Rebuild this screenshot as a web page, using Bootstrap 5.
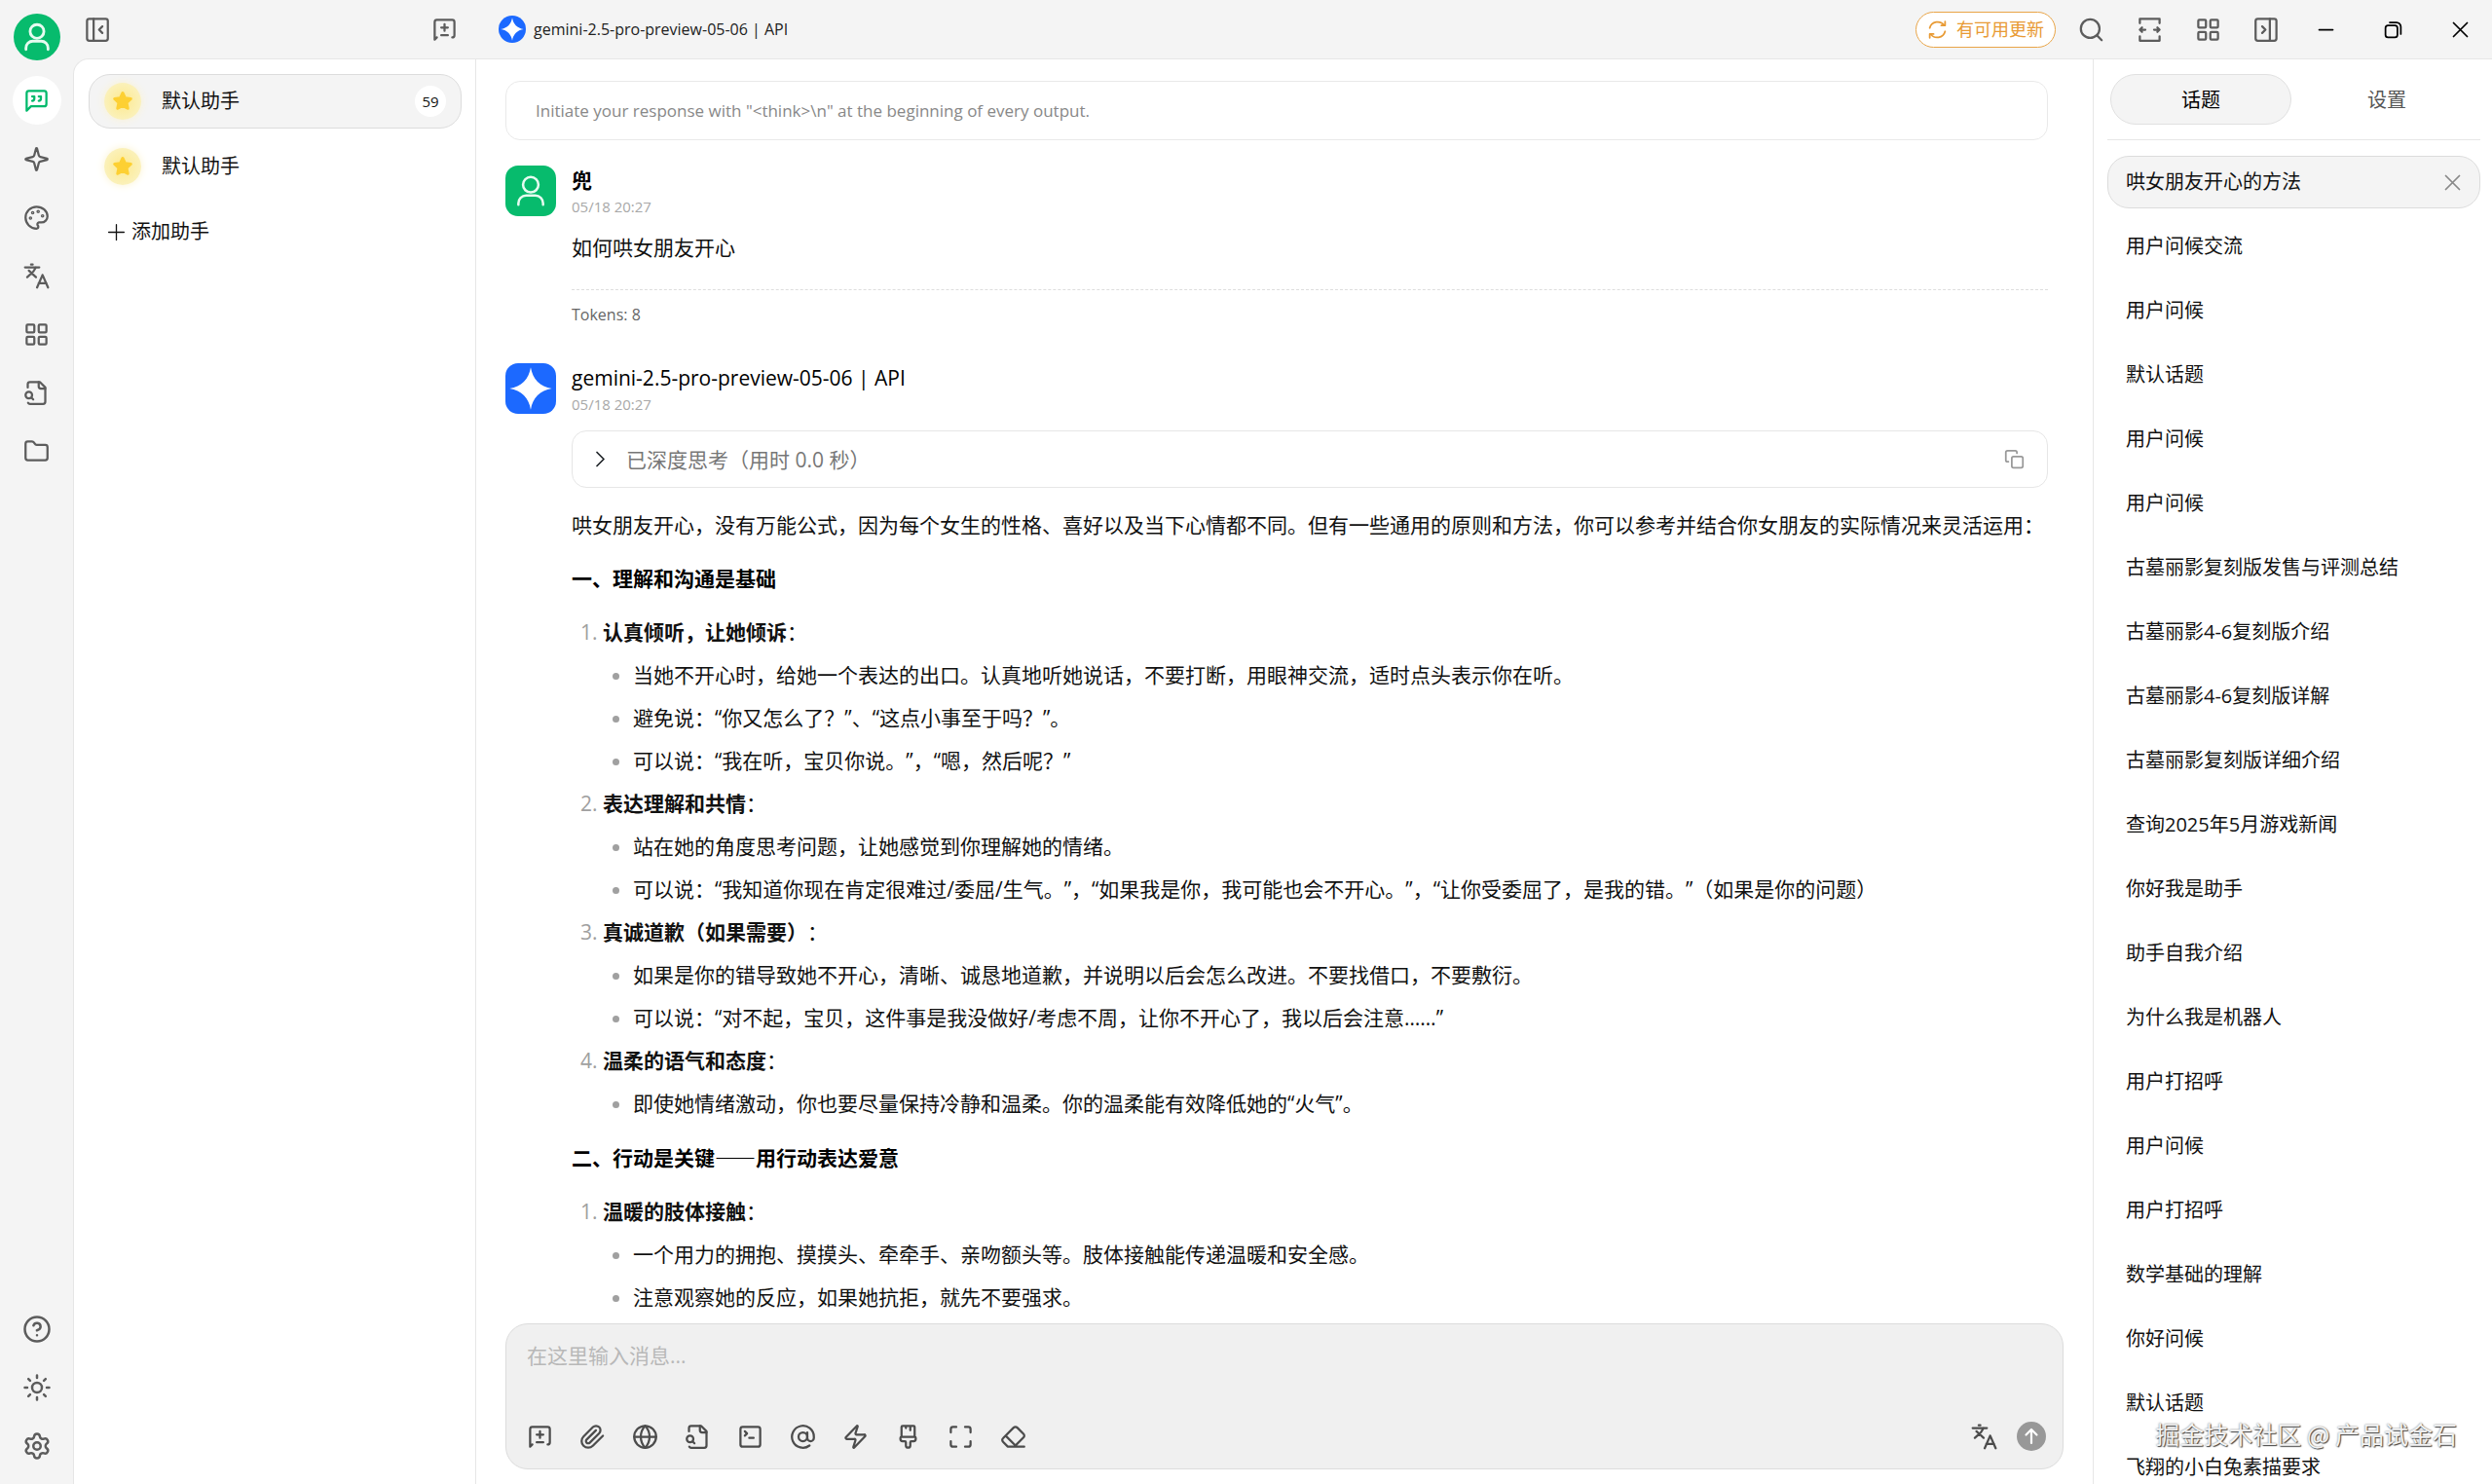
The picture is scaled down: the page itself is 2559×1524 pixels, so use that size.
<!DOCTYPE html>
<html lang="zh-CN">
<head>
<meta charset="utf-8">
<meta name="viewport" content="width=device-width, initial-scale=1">
<title>gemini-2.5-pro-preview-05-06 | API</title>
<link href="https://cdn.jsdelivr.net/npm/bootstrap@5.3.0/dist/css/bootstrap.min.css" rel="stylesheet">
<style>
  :root { --line: #e6e6e6; --soft: #f4f4f4; --ink: #111; --icon: #5c5c5c; }
  body { font-family: "Open Sans", "Noto Sans CJK SC", sans-serif; font-size: 20px; line-height: 30px; color: var(--ink); background: var(--soft); text-spacing-trim: space-all; }
  svg.ico { width: 27px; height: 27px; fill: none; stroke: currentColor; stroke-width: 2; stroke-linecap: round; stroke-linejoin: round; display: block; flex: none; }
  svg.ico-lg { width: 30px; height: 30px; }
  svg.ico-sm { width: 21px; height: 21px; }
  .plain { background: none; border: 0; padding: 0; color: var(--icon); display: flex; align-items: center; justify-content: center; text-decoration: none; }

  .rail { width: 75px; padding: 14px 0; }
  .rail .plain { width: 50px; height: 50px; border-radius: 50%; }
  .rail .plain.current { background: #fff; color: #00b96b; }
  .rail .plain.me { width: 48px; height: 48px; background: #07bb6d; color: #e6fbf0; }
  .face.me { background: #07bb6d; color: #e6fbf0; }
  .me svg.ico { width: 34px; height: 34px; stroke-width: 2; }
  .rail-group { gap: 10px; }

  .topbar { height: 60px; }
  .topbar-left { width: 413px; padding: 0 18px 0 11px; }
  .model-name { font-size: 16px; color: #222; }
  .gem { border-radius: 50%; background: #1c69ff; width: 28px; height: 28px; }
  .update { height: 37px; border: 1px solid #e9a548; border-radius: 20px; background: #fff; color: #e89a34; font-size: 18px; line-height: 24px; padding: 0 11px; gap: 9px; margin-right: -10px; }
  .tools { gap: 33px; padding-right: 22px; }
  .win { gap: 44px; color: #000; padding-left: 4px; }
  .win .plain { color: #000; }

  .stage { background: #fff; border-top: 1px solid var(--line); border-left: 1px solid var(--line); border-top-left-radius: 16px; overflow: hidden; }
  .assistants { width: 413px; padding: 15px 14px 15px 15px; border-right: 1px solid var(--line); }
  .assistants .pick { height: 56px; border: 1px solid transparent; border-radius: 22px; padding: 0 15px; gap: 21px; color: var(--ink); text-decoration: none; background: none; margin-bottom: 11px; }
  .assistants .pick.current { background: var(--soft); border-color: #dcdcdc; }
  .halo { width: 38px; height: 38px; border-radius: 50%; background: radial-gradient(circle, #fde98f 0, #fbf0b4 60%, #faf3cd 100%); box-shadow: 0 0 8px #fbf3d0; }
  .halo svg { width: 24px; height: 24px; }
  .count { width: 32px; height: 32px; border-radius: 50%; background: #fff; font-size: 15px; }
  .assistants .add { gap: 5px; padding: 0 17px; }
  .add svg.ico { stroke-width: 1.5; }

  .feed { padding: 22px 46px 0 30px; overflow: hidden; }
  .prompt-box { border: 1px solid #e9e9e9; border-radius: 15px; height: 61px; padding: 0 30px; font-size: 17px; color: #888; margin-bottom: 26px; }
  .msg { gap: 16px; }
  .face { width: 52px; height: 52px; border-radius: 13px; flex: none; }
  .face.me svg.ico { width: 38px; height: 38px; stroke-width: 1.6; }
  .face.bot { background: #1c69ff; }
  .who { font-size: 21px; line-height: 30px; color: #000; }
  .when { font-size: 15px; line-height: 24px; color: #a8a8a8; }
  .said { font-size: 21px; line-height: 34px; }
  .msg .said { margin-top: 13px; }
  .foot { border-top: 1px dashed #dedede; margin-top: 26px; padding-top: 10px; font-size: 16px; color: #666; margin-bottom: 35px; }
  .thought { height: 59px; border: 1px solid #e6e6e6; border-radius: 15px; padding: 0 23px 0 18px; margin-top: 15px; font-size: 21px; color: #777; gap: 16px; }
  .thought .plain { color: #999; }
  .msg .answer { margin-top: 21px; }
  .answer p, .answer h2 { font-size: 21px; line-height: 34px; margin: 0 0 21px; }
  .answer h2 { font-weight: 700; color: #000; }
  .answer h2 span { font-family: "Noto Sans CJK SC", sans-serif; }
  .answer ol { padding-left: 32px; margin: 0 0 21px; }
  .answer ul { padding-left: 31px; margin: 10px 0 0; list-style: disc; }
  .answer li + li { margin-top: 10px; }
  .answer li::marker { color: #a0a0a0; }

  .composer { margin: 0 30px 15px; border: 1px solid #dcdcdc; border-radius: 23px; background: #f0f0f0; height: 150px; padding: 15px 17px 18px 21px; }
  .composer textarea { border: 0; background: none; resize: none; outline: 0; font-size: 21px; line-height: 34px; padding: 0; color: var(--ink); }
  .composer textarea::placeholder { color: #b8b8b8; opacity: 1; }
  .composer .plain { color: #4c4c4c; }
  .kit { gap: 27px; }
  .send svg { width: 30px; height: 30px; }

  .topics { width: 410px; border-left: 1px solid var(--line); padding: 15px 12px 0 14px; overflow: hidden; }
  .tabs { padding: 0 3px 15px 3px; border-bottom: 1px solid var(--line); gap: 5px; margin-bottom: 16px; }
  .tabs button { height: 52px; border: 1px solid transparent; border-radius: 26px; background: none; color: #555; flex: 1 1 0; padding-top: 3px; }
  .tabs button.current { background: var(--soft); border-color: #e0e0e0; color: #000; }
  .topics li { height: 54px; margin-bottom: 12px; padding: 0 17px 0 18px; border: 1px solid transparent; border-radius: 22px; }
  .topics li.current { background: var(--soft); border-color: #dcdcdc; }
  .topics li a { color: var(--ink); text-decoration: none; white-space: nowrap; }
  .topics .plain { color: #888; }
  .stamp { position: absolute; right: 36px; bottom: 32px; font-size: 25px; line-height: 40px; color: #f2f2f2; text-shadow: 1px 1px 1px #444, 0 0 2px #777; pointer-events: none; font-family: "Noto Sans CJK SC", sans-serif; }
</style>
</head>
<body>
<svg class="d-none" xmlns="http://www.w3.org/2000/svg">
  <symbol id="user" viewBox="0 0 24 24"><circle cx="12" cy="8" r="5"/><path d="M20 21v-1a5 5 0 0 0-5-5H9a5 5 0 0 0-5 5v1"/></symbol>
  <symbol id="quote" viewBox="0 0 24 24"><path d="M21 15a2 2 0 0 1-2 2H7l-4 4V5a2 2 0 0 1 2-2h14a2 2 0 0 1 2 2z"/><path d="M8 12a2 2 0 0 0 2-2V8H8M14 12a2 2 0 0 0 2-2V8h-2"/></symbol>
  <symbol id="sparkle" viewBox="0 0 24 24"><path d="M9.937 15.5A2 2 0 0 0 8.5 14.063l-6.135-1.582a.5.5 0 0 1 0-.962L8.5 9.936A2 2 0 0 0 9.937 8.5l1.582-6.135a.5.5 0 0 1 .963 0L14.063 8.5A2 2 0 0 0 15.5 9.937l6.135 1.581a.5.5 0 0 1 0 .964L15.5 14.063a2 2 0 0 0-1.437 1.437l-1.582 6.135a.5.5 0 0 1-.963 0z"/></symbol>
  <symbol id="palette" viewBox="0 0 24 24"><circle cx="13.5" cy="6.5" r=".6"/><circle cx="17.5" cy="10.5" r=".6"/><circle cx="8.5" cy="7.5" r=".6"/><circle cx="6.5" cy="12.5" r=".6"/><path d="M12 2C6.5 2 2 6.5 2 12s4.5 10 10 10c.926 0 1.648-.746 1.648-1.688 0-.437-.18-.835-.437-1.125-.29-.289-.438-.652-.438-1.125a1.64 1.64 0 0 1 1.668-1.668h1.996c3.051 0 5.555-2.503 5.555-5.554C21.965 6.012 17.461 2 12 2z"/></symbol>
  <symbol id="lang" viewBox="0 0 24 24"><path d="m5 7 6.500 6M3.500 13l5.500-5 2.500-4M1.500 4h13M7 1.500h1.500M22.500 22.500l-5-11.500-5 11.500M14 18.500h7"/></symbol>
  <symbol id="grid" viewBox="0 0 24 24"><rect x="3" y="3" width="7" height="7" rx="1"/><rect x="14" y="3" width="7" height="7" rx="1"/><rect x="14" y="14" width="7" height="7" rx="1"/><rect x="3" y="14" width="7" height="7" rx="1"/></symbol>
  <symbol id="filesearch" viewBox="0 0 24 24"><path d="M14 2v4a2 2 0 0 0 2 2h4"/><path d="M4.268 21a2 2 0 0 0 1.727 1H18a2 2 0 0 0 2-2V7l-5-5H6a2 2 0 0 0-2 2v3"/><path d="m9 18-1.500-1.500"/><circle cx="5" cy="14" r="3"/></symbol>
  <symbol id="folder" viewBox="0 0 24 24"><path d="M20 20a2 2 0 0 0 2-2V8a2 2 0 0 0-2-2h-7.900a2 2 0 0 1-1.690-.9L9.600 3.900A2 2 0 0 0 7.930 3H4a2 2 0 0 0-2 2v13a2 2 0 0 0 2 2Z"/></symbol>
  <symbol id="help" viewBox="0 0 24 24"><circle cx="12" cy="12" r="10"/><path d="M9.090 9a3 3 0 0 1 5.830 1c0 2-3 3-3 3M12 17h.01"/></symbol>
  <symbol id="sun" viewBox="0 0 24 24"><circle cx="12" cy="12" r="4"/><path d="M12 2v2M12 20v2M4.930 4.930l1.410 1.410M17.660 17.660l1.410 1.410M2 12h2M20 12h2M6.340 17.660l-1.410 1.410M19.070 4.930l-1.410 1.410"/></symbol>
  <symbol id="gear" viewBox="0 0 24 24"><path d="M9.670 4.140a2.340 2.340 0 0 1 4.660 0 2.340 2.340 0 0 0 3.320 1.910 2.340 2.340 0 0 1 2.330 4.030 2.340 2.340 0 0 0 0 3.840 2.340 2.340 0 0 1-2.330 4.030 2.340 2.340 0 0 0-3.320 1.910 2.340 2.340 0 0 1-4.660 0 2.340 2.340 0 0 0-3.320-1.910 2.340 2.340 0 0 1-2.330-4.030 2.340 2.340 0 0 0 0-3.840 2.340 2.340 0 0 1 2.330-4.030 2.340 2.340 0 0 0 3.320-1.910"/><circle cx="12" cy="12" r="3"/></symbol>
  <symbol id="panelleft" viewBox="0 0 24 24"><rect x="3" y="2" width="19" height="20" rx="2"/><path d="M9 2v20M17 15l-3-3 3-3"/></symbol>
  <symbol id="panelright" viewBox="0 0 24 24"><rect x="2" y="2" width="19" height="20" rx="2"/><path d="M15 2v20M8 9l3 3-3 3"/></symbol>
  <symbol id="newtopic" viewBox="0 0 24 24"><path d="m5 19-2 2V5a2 2 0 0 1 2-2h14a2 2 0 0 1 2 2v12a2 2 0 0 1-2 2M9 10h6M12 7v6M9 17h6"/></symbol>
  <symbol id="search" viewBox="0 0 24 24"><circle cx="11" cy="11" r="8.500"/><path d="m21.500 21.500-4.300-4.300"/></symbol>
  <symbol id="widen" viewBox="0 0 24 24"><path d="M3 6V2h18v4M3 18v4h18v-4M3 12h5M16 12h5M5 10l-2 2 2 2M19 10l2 2-2 2"/></symbol>
  <symbol id="refresh" viewBox="0 0 24 24"><path d="M3 10a9.500 9.500 0 0 1 17-3M21 2.500V7h-4.500M21 14a9.500 9.500 0 0 1-17 3M3 21.500V17h4.500"/></symbol>
  <symbol id="clip" viewBox="0 0 24 24"><path d="m21.440 11.050-9.190 9.190a6 6 0 0 1-8.490-8.490l8.570-8.570A4 4 0 1 1 18 8.840l-8.590 8.570a2 2 0 0 1-2.830-2.830l8.490-8.480"/></symbol>
  <symbol id="globe" viewBox="0 0 24 24"><circle cx="12" cy="12" r="10"/><path d="M12 2a14.500 14.500 0 0 0 0 20 14.500 14.500 0 0 0 0-20M2 12h20"/></symbol>
  <symbol id="term" viewBox="0 0 24 24"><rect x="3" y="3" width="18" height="18" rx="2"/><path d="m7 11 2-2-2-2M11 13h4"/></symbol>
  <symbol id="at" viewBox="0 0 24 24"><circle cx="12" cy="12" r="4"/><path d="M16 8v5a3 3 0 0 0 6 0v-1a10 10 0 1 0-4 8"/></symbol>
  <symbol id="zap" viewBox="0 0 24 24"><path d="M4 14a1 1 0 0 1-.780-1.630l9.900-10.200a.5.5 0 0 1 .860.460l-1.920 6.020A1 1 0 0 0 13 10h7a1 1 0 0 1 .780 1.630l-9.900 10.200a.5.5 0 0 1-.860-.460l1.920-6.020A1 1 0 0 0 11 14z"/></symbol>
  <symbol id="brush" viewBox="0 0 24 24"><path d="M10 2v2M14 2v4M17 2a1 1 0 0 1 1 1v9H6V3a1 1 0 0 1 1-1zM6 12a1 1 0 0 0-1 1v1a2 2 0 0 0 2 2h2a1 1 0 0 1 1 1v2.900a2 2 0 1 0 4 0V17a1 1 0 0 1 1-1h2a2 2 0 0 0 2-2v-1a1 1 0 0 0-1-1"/></symbol>
  <symbol id="full" viewBox="0 0 24 24"><path d="M8 3H5a2 2 0 0 0-2 2v3M21 8V5a2 2 0 0 0-2-2h-3M3 16v3a2 2 0 0 0 2 2h3M16 21h3a2 2 0 0 0 2-2v-3"/></symbol>
  <symbol id="eraser" viewBox="0 0 24 24"><path d="m7 21-4.300-4.300c-1-1-1-2.500 0-3.400l9.600-9.600c1-1 2.500-1 3.400 0l5.600 5.600c1 1 1 2.500 0 3.400L13 21M22 21H7M5 11l9 9"/></symbol>
  <symbol id="copy" viewBox="0 0 24 24"><rect x="9" y="9" width="13" height="13" rx="2"/><path d="M5 15H4a2 2 0 0 1-2-2V4a2 2 0 0 1 2-2h9a2 2 0 0 1 2 2v1"/></symbol>
  <symbol id="cross" viewBox="0 0 24 24"><path d="M4 4l16 16M20 4 4 20"/></symbol>
  <symbol id="plus" viewBox="0 0 24 24"><path d="M12 3v18M3 12h18"/></symbol>
  <symbol id="chev" viewBox="0 0 24 24"><path d="m8 4 8 8-8 8"/></symbol>
  <symbol id="minus" viewBox="0 0 24 24"><path d="M4 12h16"/></symbol>
  <symbol id="restore" viewBox="0 0 24 24"><rect x="3" y="7" width="14" height="14" rx="3"/><path d="M8 3.500h8a5 5 0 0 1 5 5V17"/></symbol>
  <symbol id="gem" viewBox="0 0 24 24"><path fill="#fff" d="M12 2c.9 5.600 4.400 9.100 10 10-5.600.9-9.100 4.400-10 10-.9-5.600-4.400-9.100-10-10 5.600-.9 9.100-4.400 10-10z"/></symbol>
  <symbol id="star" viewBox="0 0 24 24"><path fill="#fdd033" stroke="#fdd033" stroke-width="3" stroke-linejoin="round" d="m12 3.500 2.500 5.300 5.800.7-4.300 4 1.200 5.800L12 16.500l-5.200 2.800L8 13.500l-4.300-4 5.800-.7z"/></symbol>
</svg>

<div class="d-flex vh-100 overflow-hidden">
  <nav class="rail d-flex flex-column align-items-center flex-shrink-0" aria-label="主导航">
    <button class="plain me flex-shrink-0" aria-label="用户"><svg class="ico"><use href="#user"/></svg></button>
    <div class="rail-group d-flex flex-column pt-3">
      <a href="#" class="plain current" aria-label="聊天"><svg class="ico"><use href="#quote"/></svg></a>
      <a href="#" class="plain" aria-label="智能体"><svg class="ico"><use href="#sparkle"/></svg></a>
      <a href="#" class="plain" aria-label="绘画"><svg class="ico"><use href="#palette"/></svg></a>
      <a href="#" class="plain" aria-label="翻译"><svg class="ico"><use href="#lang"/></svg></a>
      <a href="#" class="plain" aria-label="小程序"><svg class="ico"><use href="#grid"/></svg></a>
      <a href="#" class="plain" aria-label="知识库"><svg class="ico"><use href="#filesearch"/></svg></a>
      <a href="#" class="plain" aria-label="文件"><svg class="ico"><use href="#folder"/></svg></a>
    </div>
    <div class="rail-group d-flex flex-column mt-auto">
      <a href="#" class="plain" aria-label="帮助"><svg class="ico ico-lg"><use href="#help"/></svg></a>
      <a href="#" class="plain" aria-label="主题"><svg class="ico ico-lg"><use href="#sun"/></svg></a>
      <a href="#" class="plain" aria-label="设置"><svg class="ico ico-lg"><use href="#gear"/></svg></a>
    </div>
  </nav>

  <div class="d-flex flex-column flex-grow-1 overflow-hidden">
    <header class="topbar d-flex align-items-center flex-shrink-0">
      <div class="topbar-left d-flex justify-content-between">
        <button class="plain" aria-label="收起"><svg class="ico"><use href="#panelleft"/></svg></button>
        <button class="plain" aria-label="新建话题"><svg class="ico"><use href="#newtopic"/></svg></button>
      </div>
      <button class="plain gap-2 ms-4"><svg class="gem"><use href="#gem"/></svg><span class="model-name">gemini-2.5-pro-preview-05-06 | API</span></button>
      <div class="tools d-flex align-items-center ms-auto">
        <button class="update d-flex align-items-center"><svg class="ico ico-sm"><use href="#refresh"/></svg>有可用更新</button>
        <button class="plain" aria-label="搜索"><svg class="ico"><use href="#search"/></svg></button>
        <button class="plain" aria-label="宽度"><svg class="ico"><use href="#widen"/></svg></button>
        <button class="plain" aria-label="小程序"><svg class="ico"><use href="#grid"/></svg></button>
        <button class="plain" aria-label="侧栏"><svg class="ico"><use href="#panelright"/></svg></button>
        <div class="win d-flex">
          <button class="plain" aria-label="最小化"><svg class="ico ico-sm"><use href="#minus"/></svg></button>
          <button class="plain px-1" aria-label="还原"><svg class="ico ico-sm"><use href="#restore"/></svg></button>
          <button class="plain" aria-label="关闭"><svg class="ico ico-sm"><use href="#cross"/></svg></button>
        </div>
      </div>
    </header>

    <div class="stage d-flex flex-grow-1">
      <aside class="assistants flex-shrink-0 d-flex flex-column">
        <a href="#" class="pick current d-flex align-items-center"><span class="halo d-flex align-items-center justify-content-center"><svg><use href="#star"/></svg></span><span>默认助手</span><span class="count d-flex align-items-center justify-content-center ms-auto">59</span></a>
        <a href="#" class="pick d-flex align-items-center"><span class="halo d-flex align-items-center justify-content-center"><svg><use href="#star"/></svg></span><span>默认助手</span></a>
        <button class="pick add d-flex align-items-center"><svg class="ico ico-sm"><use href="#plus"/></svg>添加助手</button>
      </aside>

      <main class="d-flex flex-column flex-grow-1 overflow-hidden">
        <div class="feed flex-grow-1">
          <div class="prompt-box d-flex align-items-center">Initiate your response with "&lt;think&gt;\n" at the beginning of every output.</div>

          <article class="msg d-flex">
            <span class="face me d-flex align-items-center justify-content-center"><svg class="ico"><use href="#user"/></svg></span>
            <div class="flex-grow-1">
              <div class="who fw-bold">兜</div>
              <div class="when">05/18 20:27</div>
              <div class="said">如何哄女朋友开心</div>
              <div class="foot">Tokens: 8</div>
            </div>
          </article>

          <article class="msg d-flex">
            <svg class="face bot"><use href="#gem"/></svg>
            <div class="flex-grow-1">
              <div class="who">gemini-2.5-pro-preview-05-06 | API</div>
              <div class="when">05/18 20:27</div>
              <div class="thought d-flex align-items-center">
                <svg class="ico ico-sm text-dark"><use href="#chev"/></svg>
                <span>已深度思考（用时 0.0 秒）</span>
                <button class="plain ms-auto" aria-label="复制"><svg class="ico ico-sm"><use href="#copy"/></svg></button>
              </div>
              <div class="said answer">
                <p>哄女朋友开心，没有万能公式，因为每个女生的性格、喜好以及当下心情都不同。但有一些通用的原则和方法，你可以参考并结合你女朋友的实际情况来灵活运用：</p>
                <h2>一、理解和沟通是基础</h2>
                <ol>
                  <li><strong>认真倾听，让她倾诉</strong>：
                    <ul>
                      <li>当她不开心时，给她一个表达的出口。认真地听她说话，不要打断，用眼神交流，适时点头表示你在听。</li>
                      <li>避免说：“你又怎么了？”、“这点小事至于吗？”。</li>
                      <li>可以说：“我在听，宝贝你说。”，“嗯，然后呢？”</li>
                    </ul>
                  </li>
                  <li><strong>表达理解和共情</strong>：
                    <ul>
                      <li>站在她的角度思考问题，让她感觉到你理解她的情绪。</li>
                      <li>可以说：“我知道你现在肯定很难过/委屈/生气。”，“如果我是你，我可能也会不开心。”，“让你受委屈了，是我的错。”（如果是你的问题）</li>
                    </ul>
                  </li>
                  <li><strong>真诚道歉（如果需要）</strong>：
                    <ul>
                      <li>如果是你的错导致她不开心，清晰、诚恳地道歉，并说明以后会怎么改进。不要找借口，不要敷衍。</li>
                      <li>可以说：“对不起，宝贝，这件事是我没做好/考虑不周，让你不开心了，我以后会注意……”</li>
                    </ul>
                  </li>
                  <li><strong>温柔的语气和态度</strong>：
                    <ul>
                      <li>即使她情绪激动，你也要尽量保持冷静和温柔。你的温柔能有效降低她的“火气”。</li>
                    </ul>
                  </li>
                </ol>
                <h2>二、行动是关键<span>——</span>用行动表达爱意</h2>
                <ol class="mb-0">
                  <li><strong>温暖的肢体接触</strong>：
                    <ul>
                      <li>一个用力的拥抱、摸摸头、牵牵手、亲吻额头等。肢体接触能传递温暖和安全感。</li>
                      <li>注意观察她的反应，如果她抗拒，就先不要强求。</li>
                    </ul>
                  </li>
                </ol>
              </div>
            </div>
          </article>
        </div>

        <form class="composer d-flex flex-column flex-shrink-0">
          <textarea class="flex-grow-1" aria-label="消息" placeholder="在这里输入消息..."></textarea>
          <div class="d-flex align-items-center justify-content-between">
            <div class="kit d-flex">
              <button type="button" class="plain" aria-label="新建话题"><svg class="ico"><use href="#newtopic"/></svg></button>
              <button type="button" class="plain" aria-label="附件"><svg class="ico"><use href="#clip"/></svg></button>
              <button type="button" class="plain" aria-label="联网"><svg class="ico"><use href="#globe"/></svg></button>
              <button type="button" class="plain" aria-label="知识库"><svg class="ico"><use href="#filesearch"/></svg></button>
              <button type="button" class="plain" aria-label="工具"><svg class="ico"><use href="#term"/></svg></button>
              <button type="button" class="plain" aria-label="提及模型"><svg class="ico"><use href="#at"/></svg></button>
              <button type="button" class="plain" aria-label="快捷短语"><svg class="ico"><use href="#zap"/></svg></button>
              <button type="button" class="plain" aria-label="清空"><svg class="ico"><use href="#brush"/></svg></button>
              <button type="button" class="plain" aria-label="展开"><svg class="ico"><use href="#full"/></svg></button>
              <button type="button" class="plain" aria-label="清除上下文"><svg class="ico"><use href="#eraser"/></svg></button>
            </div>
            <div class="d-flex align-items-center gap-3">
              <button type="button" class="plain me-1" aria-label="翻译"><svg class="ico"><use href="#lang"/></svg></button>
              <button class="plain send" aria-label="发送"><svg viewBox="0 0 30 30"><circle cx="15" cy="15" r="15" fill="#989898"/><path d="M15 22V8M9.500 13.500 15 8l5.500 5.500" fill="none" stroke="#fff" stroke-width="2.200" stroke-linecap="round" stroke-linejoin="round"/></svg></button>
            </div>
          </div>
        </form>
      </main>

      <aside class="topics flex-shrink-0">
        <div class="tabs d-flex" role="tablist">
          <button class="current" role="tab" aria-selected="true">话题</button>
          <button role="tab" aria-selected="false">设置</button>
        </div>
        <ul class="list-unstyled mb-0">
          <li class="current d-flex align-items-center justify-content-between"><a href="#">哄女朋友开心的方法</a><button class="plain" aria-label="删除"><svg class="ico ico-sm"><use href="#cross"/></svg></button></li>
          <li class="d-flex align-items-center"><a href="#">用户问候交流</a></li>
          <li class="d-flex align-items-center"><a href="#">用户问候</a></li>
          <li class="d-flex align-items-center"><a href="#">默认话题</a></li>
          <li class="d-flex align-items-center"><a href="#">用户问候</a></li>
          <li class="d-flex align-items-center"><a href="#">用户问候</a></li>
          <li class="d-flex align-items-center"><a href="#">古墓丽影复刻版发售与评测总结</a></li>
          <li class="d-flex align-items-center"><a href="#">古墓丽影4-6复刻版介绍</a></li>
          <li class="d-flex align-items-center"><a href="#">古墓丽影4-6复刻版详解</a></li>
          <li class="d-flex align-items-center"><a href="#">古墓丽影复刻版详细介绍</a></li>
          <li class="d-flex align-items-center"><a href="#">查询2025年5月游戏新闻</a></li>
          <li class="d-flex align-items-center"><a href="#">你好我是助手</a></li>
          <li class="d-flex align-items-center"><a href="#">助手自我介绍</a></li>
          <li class="d-flex align-items-center"><a href="#">为什么我是机器人</a></li>
          <li class="d-flex align-items-center"><a href="#">用户打招呼</a></li>
          <li class="d-flex align-items-center"><a href="#">用户问候</a></li>
          <li class="d-flex align-items-center"><a href="#">用户打招呼</a></li>
          <li class="d-flex align-items-center"><a href="#">数学基础的理解</a></li>
          <li class="d-flex align-items-center"><a href="#">你好问候</a></li>
          <li class="d-flex align-items-center"><a href="#">默认话题</a></li>
          <li class="d-flex align-items-center"><a href="#">飞翔的小白兔素描要求</a></li>
        </ul>
      </aside>
    </div>
  </div>
</div>
<div class="stamp">掘金技术社区 @ 产品试金石</div>
<script src="https://cdn.jsdelivr.net/npm/bootstrap@5.3.0/dist/js/bootstrap.bundle.min.js"></script>
</body>
</html>
